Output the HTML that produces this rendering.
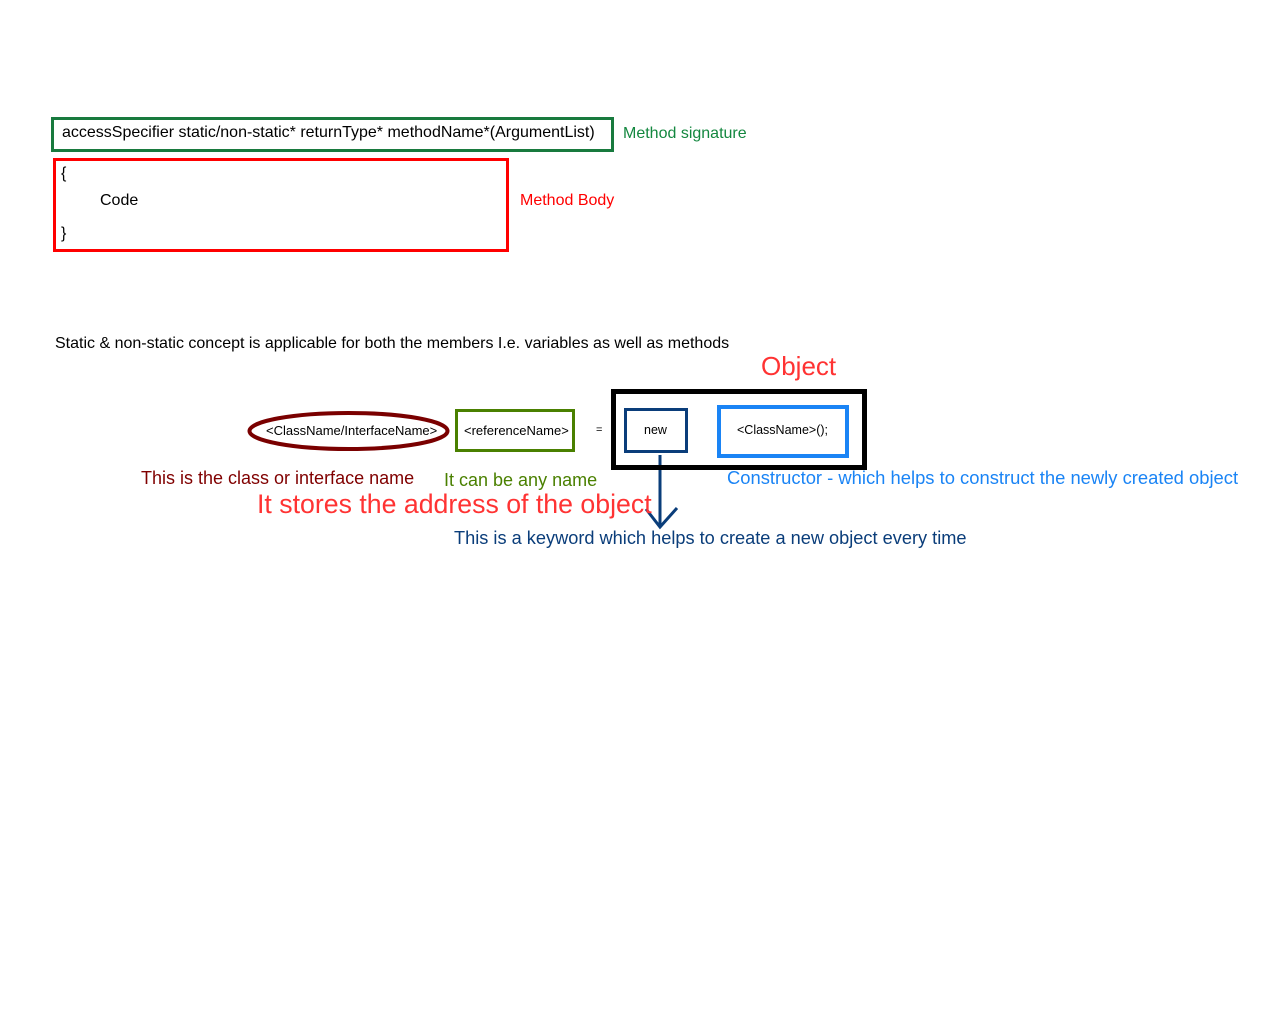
<!DOCTYPE html>
<html><head><meta charset="utf-8"><style>
body{margin:0;width:1280px;height:1024px;background:#fff;position:relative;font-family:"Liberation Sans",Arial,sans-serif;overflow:hidden}
.a{position:absolute;white-space:nowrap;line-height:1}
.b{position:absolute;box-sizing:border-box}
</style></head><body>
<div class="b" style="left:51px;top:117px;width:563px;height:35px;border:3px solid #187a3e"></div>
<div class="a" style="left:62px;top:125px;font-size:16px;">accessSpecifier static/non-static* returnType* methodName*(ArgumentList)</div>
<div class="a" style="left:623px;top:126px;font-size:16px;color:#13873f">Method signature</div>
<div class="b" style="left:53px;top:158px;width:456px;height:94px;border:3px solid #ff0000"></div>
<div class="a" style="left:61px;top:166px;font-size:16px">{</div>
<div class="a" style="left:100px;top:193px;font-size:16px">Code</div>
<div class="a" style="left:61px;top:226px;font-size:16px">}</div>
<div class="a" style="left:520px;top:193px;font-size:16px;color:#ff0000">Method Body</div>
<div class="a" style="left:55px;top:336px;font-size:16px">Static &amp; non-static concept is applicable for both the members I.e. variables as well as methods</div>
<div class="a" style="left:761px;top:353px;font-size:26px;color:#ff3333">Object</div>
<svg class="b" style="left:0;top:0" width="1280" height="1024">
<ellipse cx="348.5" cy="431" rx="99" ry="18" fill="none" stroke="#7a0000" stroke-width="4"/>
<path d="M660 455 V527 M646 509 L660 527 L677 508" fill="none" stroke="#0a3d7a" stroke-width="3"/>
</svg>
<div class="a" style="left:266px;top:424px;font-size:13px">&lt;ClassName/InterfaceName&gt;</div>
<div class="b" style="left:455px;top:409px;width:120px;height:43px;border:3px solid #4a8000"></div>
<div class="a" style="left:464px;top:424px;font-size:13px">&lt;referenceName&gt;</div>
<div class="a" style="left:596px;top:425px;font-size:11px">=</div>
<div class="b" style="left:611px;top:389px;width:256px;height:81px;border:5px solid #000"></div>
<div class="b" style="left:624px;top:408px;width:64px;height:45px;border:3px solid #0a3d7a"></div>
<div class="a" style="left:644px;top:424px;font-size:12.5px">new</div>
<div class="b" style="left:717px;top:405px;width:132px;height:53px;border:4px solid #1a84f5"></div>
<div class="a" style="left:737px;top:424px;font-size:12.5px">&lt;ClassName&gt;();</div>
<div class="a" style="left:141px;top:469px;font-size:18px;color:#800000">This is the class or interface name</div>
<div class="a" style="left:444px;top:471px;font-size:18px;color:#4a8000">It can be any name</div>
<div class="a" style="left:727px;top:469px;font-size:18.4px;color:#1a84f5">Constructor - which helps to construct the newly created object</div>
<div class="a" style="left:257px;top:491px;font-size:26.7px;color:#ff3333">It stores the address of the object</div>
<div class="a" style="left:454px;top:529px;font-size:18.2px;color:#0a3d7a">This is a keyword which helps to create a new object every time</div>
</body></html>
